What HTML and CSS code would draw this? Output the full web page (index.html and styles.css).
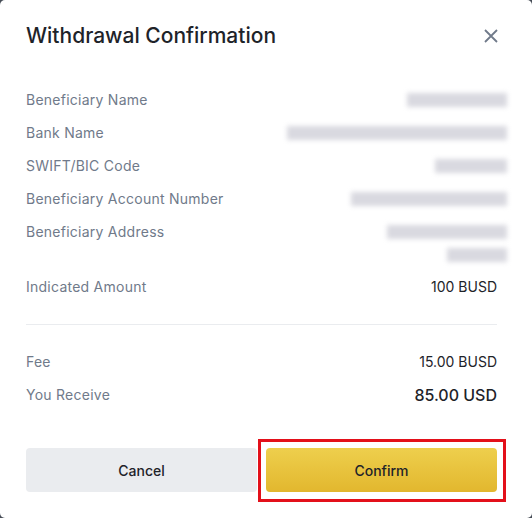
FILE: index.html
```html
<!DOCTYPE html>
<html>
<head>
<meta charset="utf-8">
<link rel="stylesheet" href="styles.css">
</head>
<body>
<div class="modal">
  <div class="header">
    <div class="title">Withdrawal Confirmation</div>
    <svg class="close" width="16" height="16" viewBox="0 0 16 16"><path d="M2 2L14 14M14 2L2 14" stroke="#707a8a" stroke-width="1.8" fill="none"/></svg>
  </div>
  <div class="details">
    <div class="row"><span class="label">Beneficiary Name</span><span class="blur w1"></span></div>
    <div class="row"><span class="label">Bank Name</span><span class="blur w2"></span></div>
    <div class="row"><span class="label">SWIFT/BIC Code</span><span class="blur w3"></span></div>
    <div class="row"><span class="label">Beneficiary Account Number</span><span class="blur w4"></span></div>
    <div class="row"><span class="label">Beneficiary Address</span><span class="addr"><span class="blur w5"></span><span class="blur w6"></span></span></div>
    <div class="row amount"><span class="label">Indicated Amount</span><span class="value">100 BUSD</span></div>
  </div>
  <div class="divider"></div>
  <div class="details">
    <div class="row"><span class="label">Fee</span><span class="value">15.00 BUSD</span></div>
    <div class="row"><span class="label">You Receive</span><span class="value big">85.00 USD</span></div>
  </div>
  <div class="actions">
    <button class="btn cancel">Cancel</button>
    <button class="btn confirm">Confirm</button>
  </div>
</div>
</body>
</html>
```
FILE: styles.css
```css
html, body { margin: 0; padding: 0; }
body {
  background: #474d57;
  font-family: Inter, "Liberation Sans", sans-serif;
  width: 532px;
  height: 518px;
  overflow: hidden;
}
.modal {
  background: #fff;
  width: 532px;
  height: 518px;
  border-radius: 5px;
  box-sizing: border-box;
  padding: 0 35px 0 26px;
}
.header {
  display: flex;
  justify-content: space-between;
  align-items: center;
  padding-top: 22px;
  height: 28px;
}
.title {
  font-size: 21px;
  line-height: 28px;
  font-weight: 500;
  color: #1e2329;
}
.close { margin-right: -2px; width: 16px; height: 16px; }
.details {
  display: flex;
  flex-direction: column;
  gap: 13px;
}
.header + .details { margin-top: 40px; }
.row {
  display: flex;
  justify-content: space-between;
  align-items: flex-start;
  font-size: 14px;
  line-height: 20px;
}
.label { color: #707a8a; letter-spacing: 0.25px; }
.value { color: #1e2329; }
.value.big { font-size: 16px; font-weight: 500; }
.amount { margin-top: 2px; }
.addr { display: flex; flex-direction: column; align-items: flex-end; gap: 6px; }
.blur {
  display: block;
  background: #d9d9e0;
  height: 14px;
  margin-top: 3px;
  margin-right: -10px;
  filter: blur(2.5px);
}
.w1 { width: 100px; }
.w2 { width: 220px; }
.w3 { width: 72px; }
.w4 { width: 156px; }
.w5 { width: 120px; }
.w6 { width: 60px; }
.divider {
  height: 1px;
  background: #eaecef;
  margin: 27px 0;
}
.actions {
  display: flex;
  gap: 9px;
  margin-top: 43px;
}
.btn {
  flex: 1;
  height: 44px;
  border: none;
  border-radius: 4px;
  font-family: Inter, "Liberation Sans", sans-serif;
  font-size: 14px;
  font-weight: 500;
  color: #1e2329;
}
.cancel { background: #eaecef; }
.confirm {
  position: relative;
  background: linear-gradient(180deg, #eecf4d 0%, #e2b72e 100%);
}
.confirm::after {
  content: "";
  position: absolute;
  top: -9px;
  bottom: -10px;
  left: -8px;
  right: -9px;
  border: 3px solid #e3101a;
}
```
